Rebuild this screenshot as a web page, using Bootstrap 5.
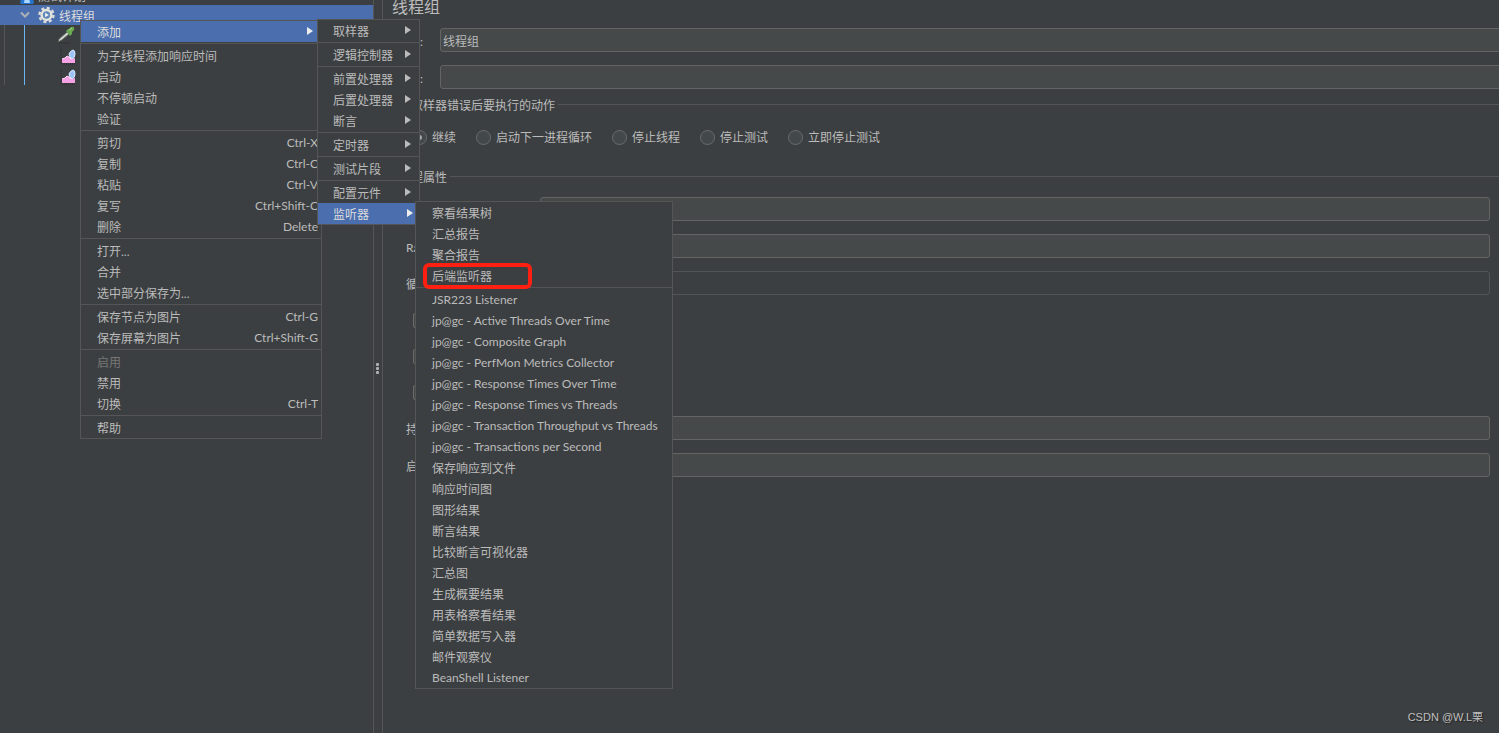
<!DOCTYPE html>
<html lang="zh-CN" data-bs-theme="dark">
<head>
<meta charset="utf-8">
<meta name="viewport" content="width=device-width, initial-scale=1">
<title>线程组</title>
<link href="https://cdn.jsdelivr.net/npm/bootstrap@5.3.0/dist/css/bootstrap.min.css" rel="stylesheet">
<style>
:root { --ui-bg:#3c3f41; --ui-line:#555555; --ui-sel:#4b6eaf; --ui-text:#bbbbbb; --ui-field:#45494a; --ui-edge:#646464; }
body { background:var(--ui-bg); color:var(--ui-text); font:12px/20px Lato,"Noto Sans CJK SC",sans-serif; }
.tree-pane { width:25%; min-width:374px; flex:none; border-right:1px solid var(--ui-line); }
@media (min-width:1400px) { .tree-pane { width:374px; } }
.tree-rows { margin-top:-15px; }
.tree-row { height:20px; color:var(--ui-text); white-space:nowrap; }
.tree-row span { padding-top:3px; }
.tree-row.selected { background:var(--ui-sel); color:#dddddd; padding-left:18px; }
.tree-row.selected .gear { margin-left:7px; }
.tree-row.plan { padding-left:20px; }
.tree-kids { margin-left:4px; border-left:1px solid var(--ui-line); }
.tree-kids-inner { margin-left:19px; border-left:1px solid #6bb5f5; padding-left:31px; }
.splitter { width:8px; gap:1px; padding:4px 1px 0 0; }
.splitter span { width:3px; height:3px; border-radius:1px; background:#afb1b3; }
.editor { border-left:1px solid var(--ui-line); overflow:hidden; }
.editor h1 { font-size:16px; line-height:24px; font-weight:400; color:inherit; margin:-5px 0 9px 9px; }
.field-row { height:24px; margin-bottom:13px; }
.top-label { width:48px; margin-left:9px; padding:3px 17px 0 0; text-align:right; white-space:nowrap; }
.field-row .form-control { height:24px; min-height:24px; padding:1px 2px 0; font-size:12px; line-height:20px; border:1px solid var(--ui-edge); border-radius:3px; background:var(--ui-field); color:var(--ui-text); }
.field-row .form-control:disabled { background:var(--ui-bg); border-color:#525556; }
.field-row .past-edge { margin-right:-4px; }
.field-row.before-group { margin-bottom:5px; }
.field-row.before-ticks { margin-bottom:7px; }
.ticks { margin-bottom:6px; }
.group-title { font-size:12px; line-height:20px; margin:0; padding-left:16px; gap:3px; float:none; }
.group-title span { padding-top:2px; margin-bottom:-2px; }
.group-title::after { content:""; flex:1; border-top:1px solid var(--ui-line); }
.thread-fields { padding:11px 9px 0 23px; }
.thread-label { width:134px; padding-top:3px; flex:none; white-space:nowrap; }
.choices { padding:12px 0 0 29px; gap:20px; height:52px; white-space:nowrap; }
.choices label { display:flex; align-items:center; gap:5px; height:22px; }
.choices .form-check-input { width:15px; height:15px; margin:0; background-color:#43494a; border:1px solid #6b6b6b; box-shadow:none; }
.choices label span { padding-top:2px; }
.choices .form-check-input:checked { background-image:radial-gradient(circle,#a8a8a8 0 2px,transparent 3px); }
.tick-row { height:36px; padding-left:7px; }
.tick-row .form-check-input { width:15px; height:15px; margin:0 6px 0 0; background-color:#43494a; border:1px solid #6b6b6b; border-radius:2px; }
.popup { position:absolute; background:var(--ui-bg); border:1px solid var(--ui-line); }
.popup button { display:flex; align-items:center; width:100%; height:21px; padding:3px 3px 0 16px; border:0; background:none; color:var(--ui-text); text-align:left; white-space:nowrap; }
.popup button.latin { padding-top:1px; }
.popup button:disabled { color:#777777; }
.popup button.active { background:var(--ui-sel); color:#dddddd; }
.popup hr { height:1px; margin:1px 0; border:0; background:var(--ui-line); opacity:1; }
.popup kbd { margin:0 0 2px auto; padding:0; background:none; color:inherit; font:inherit; }
.popup .caret { margin:0 5px 4px auto; width:0; height:0; border:solid transparent; border-width:4px 0 4px 6px; border-left-color:#bbbbbb; }
.popup .active .caret { border-left-color:#eeeeee; }
.menu-main { left:80px; top:20px; width:242px; }
.menu-add { left:317px; top:19px; width:103px; }
.menu-add button { padding-left:15px; }
.menu-listen { left:415px; top:201px; width:258px; }
.menu-add button.active { width:98px; }
.menu-add .active .caret { margin-right:0; }
.callout { position:absolute; left:423px; top:263px; width:109px; height:26px; border:4px solid #ff2012; border-radius:6px; pointer-events:none; }
.credit { position:absolute; right:16px; bottom:6px; color:#c0c0c0; text-shadow:1px 1px 1px #222; font:11px/20px "Liberation Sans","Noto Sans CJK SC",sans-serif; }
</style>
</head>
<body class="vh-100 overflow-hidden position-relative">
<svg class="d-none"><symbol id="chart" viewBox="0 0 18 20"><path d="M1 2v15h14" fill="none" stroke="#25272a" stroke-dasharray="1 1"/><path d="M2 16v-4l3-1 2-2 2 1 2 2 4-1v5z" fill="#f3a0e4"/><path d="M2 12l3-1 2-2 2 1 2 2" fill="none" stroke="#fbd9f6"/><path d="M13 3q2 0 2 4 0 4-3 5-3-2-3-5 1-3 4-4z" fill="#9cc4f6" stroke="#dcecff"/></symbol></svg>
<main class="d-flex h-100">
  <nav class="tree-pane overflow-hidden" aria-label="测试计划树">
    <div class="tree-rows">
      <div class="tree-row plan d-flex align-items-center">
        <svg width="14" height="20" viewBox="0 0 14 20"><path d="M4 4h6v5l4 8-1 2H1l-1-2 4-8z" fill="#2476d0"/><path d="M5 12h4l1 6H4z" fill="#acd7ff"/></svg><span class="ms-1">测试计划</span>
      </div>
      <div class="tree-row selected d-flex align-items-center">
        <svg width="13" height="10" viewBox="0 0 13 10"><path d="M3 2.500l4 4 4-4" fill="none" stroke="#adb0b5" stroke-width="2"/></svg>
        <svg class="gear" width="17" height="18" viewBox="0 0 18 18"><circle cx="9" cy="9" r="7.500" fill="none" stroke="#dcdcd6" stroke-width="2.500" stroke-dasharray="3.300 2.590"/><circle cx="9" cy="9" r="5.200" fill="#5f86b5" stroke="#e5e5e0" stroke-width="2.600"/><path d="M7.500 6.500l4 2.500-4 2.500z" fill="#e8f0fa"/></svg><span class="ms-1">线程组</span>
      </div>
      <div class="tree-kids"><div class="tree-kids-inner">
        <div class="tree-row d-flex align-items-center"><svg width="20" height="20" viewBox="0 0 20 20"><path d="M2 18h12" stroke="#303234"/><path d="M2 17l1-3 8-7 2 2-7 6z" fill="#cfd6cd" stroke="#59605a"/><path d="M10 6l2-2 1 0 2-2q4-1 3 3l-2 2 0 2-2 2z" fill="#69a84f"/><path d="M13 5l3-2" stroke="#a4d08c"/></svg></div>
        <div class="tree-row d-flex align-items-center"><svg class="ms-1 mt-1" width="18" height="20"><use href="#chart"/></svg></div>
        <div class="tree-row d-flex align-items-center"><svg class="ms-1 mt-1" width="18" height="20"><use href="#chart"/></svg></div>
      </div></div>
    </div>
  </nav>
  <div class="splitter d-flex flex-column align-items-center justify-content-center flex-shrink-0"><span></span><span></span><span></span></div>
  <form class="editor flex-grow-1">
    <h1>线程组</h1>
    <div class="field-row d-flex align-items-center"><label class="top-label flex-shrink-0" for="name">名称:</label><input class="form-control past-edge" id="name" value="线程组"></div>
    <div class="field-row before-group d-flex align-items-center"><label class="top-label flex-shrink-0" for="note">注释:</label><input class="form-control past-edge" id="note"></div>
    <fieldset>
      <legend class="group-title d-flex align-items-center"><span>在取样器错误后要执行的动作</span></legend>
      <div class="choices d-flex">
        <label><input class="form-check-input" type="radio" name="onerr" checked><span>继续</span></label>
        <label><input class="form-check-input" type="radio" name="onerr"><span>启动下一进程循环</span></label>
        <label><input class="form-check-input" type="radio" name="onerr"><span>停止线程</span></label>
        <label><input class="form-check-input" type="radio" name="onerr"><span>停止测试</span></label>
        <label><input class="form-check-input" type="radio" name="onerr"><span>立即停止测试</span></label>
      </div>
    </fieldset>
    <fieldset>
      <legend class="group-title d-flex align-items-center"><span>线程属性</span></legend>
      <div class="thread-fields">
        <div class="field-row d-flex align-items-center"><label class="thread-label" for="threads">线程数:</label><input class="form-control" id="threads"></div>
        <div class="field-row d-flex align-items-center"><label class="thread-label" for="ramp">Ramp-Up时间(秒):</label><input class="form-control" id="ramp"></div>
        <div class="field-row before-ticks d-flex align-items-center"><label class="thread-label" for="loops">循环次数</label><input class="form-control" id="loops" disabled></div>
        <div class="ticks">
          <label class="tick-row d-flex align-items-center"><input class="form-check-input" type="checkbox">永远</label>
          <label class="tick-row d-flex align-items-center"><input class="form-check-input" type="checkbox">延迟创建线程</label>
          <label class="tick-row d-flex align-items-center"><input class="form-check-input" type="checkbox">调度器</label>
        </div>
        <div class="field-row d-flex align-items-center"><label class="thread-label" for="dur">持续时间(秒)</label><input class="form-control" id="dur"></div>
        <div class="field-row d-flex align-items-center"><label class="thread-label" for="delay">启动延迟(秒)</label><input class="form-control" id="delay"></div>
      </div>
    </fieldset>
  </form>
</main>

<div class="popup menu-main">
  <button class="active">添加<span class="caret"></span></button><hr>
  <button>为子线程添加响应时间</button><button>启动</button><button>不停顿启动</button><button>验证</button><hr>
  <button>剪切<kbd>Ctrl-X</kbd></button><button>复制<kbd>Ctrl-C</kbd></button><button>粘贴<kbd>Ctrl-V</kbd></button><button>复写<kbd>Ctrl+Shift-C</kbd></button><button>删除<kbd>Delete</kbd></button><hr>
  <button>打开...</button><button>合并</button><button>选中部分保存为...</button><hr>
  <button>保存节点为图片<kbd>Ctrl-G</kbd></button><button>保存屏幕为图片<kbd>Ctrl+Shift-G</kbd></button><hr>
  <button disabled>启用</button><button>禁用</button><button>切换<kbd>Ctrl-T</kbd></button><hr>
  <button>帮助</button>
</div>
<div class="popup menu-add">
  <button>取样器<span class="caret"></span></button><hr>
  <button>逻辑控制器<span class="caret"></span></button><hr>
  <button>前置处理器<span class="caret"></span></button><button>后置处理器<span class="caret"></span></button><button>断言<span class="caret"></span></button><hr>
  <button>定时器<span class="caret"></span></button><hr>
  <button>测试片段<span class="caret"></span></button><hr>
  <button>配置元件<span class="caret"></span></button><button class="active">监听器<span class="caret"></span></button>
</div>
<div class="popup menu-listen">
  <button>察看结果树</button><button>汇总报告</button><button>聚合报告</button><button>后端监听器</button><hr>
  <button class="latin">JSR223 Listener</button><button class="latin">jp@gc - Active Threads Over Time</button><button class="latin">jp@gc - Composite Graph</button><button class="latin">jp@gc - PerfMon Metrics Collector</button><button class="latin">jp@gc - Response Times Over Time</button><button class="latin">jp@gc - Response Times vs Threads</button><button class="latin">jp@gc - Transaction Throughput vs Threads</button><button class="latin">jp@gc - Transactions per Second</button>
  <button>保存响应到文件</button><button>响应时间图</button><button>图形结果</button><button>断言结果</button><button>比较断言可视化器</button><button>汇总图</button><button>生成概要结果</button><button>用表格察看结果</button><button>简单数据写入器</button><button>邮件观察仪</button><button class="latin">BeanShell Listener</button>
</div>
<div class="callout"></div>
<div class="credit">CSDN @W.L栗</div>
<script src="https://cdn.jsdelivr.net/npm/bootstrap@5.3.0/dist/js/bootstrap.bundle.min.js"></script>
</body>
</html>
